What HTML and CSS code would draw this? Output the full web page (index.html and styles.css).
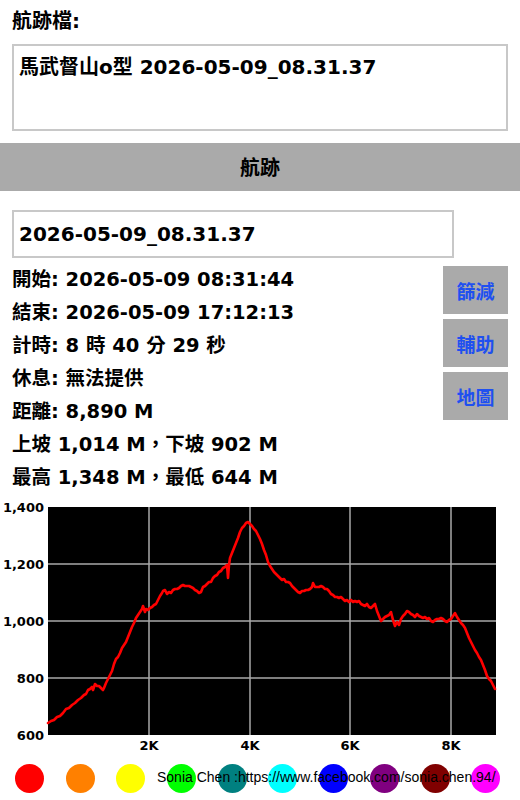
FILE: index.html
```html
<!DOCTYPE html>
<html lang="zh-Hant">
<head>
<meta charset="utf-8">
<title>航跡</title>
<link rel="stylesheet" href="styles.css">
</head>
<body>
<div class="page">
  <div class="pad">
    <div class="title">航跡檔:</div>
    <div class="filebox">馬武督山o型 2026-05-09_08.31.37</div>
  </div>
  <div class="bar">航跡</div>
  <div class="pad">
    <div class="namebox">2026-05-09_08.31.37</div>
    <div class="info-row">
      <div class="info">
        <div class="line">開始: 2026-05-09 08:31:44</div>
        <div class="line">結束: 2026-05-09 17:12:13</div>
        <div class="line">計時: 8 時 40 分 29 秒</div>
        <div class="line">休息: 無法提供</div>
        <div class="line">距離: 8,890 M</div>
        <div class="line">上坡 1,014 M，下坡 902 M</div>
        <div class="line">最高 1,348 M，最低 644 M</div>
      </div>
      <div class="buttons">
        <div class="btn">篩減</div>
        <div class="btn">輔助</div>
        <div class="btn">地圖</div>
      </div>
    </div>
  </div>
  <svg class="chart" width="520" height="262" viewBox="0 494 520 262" xmlns="http://www.w3.org/2000/svg">
    <rect x="48" y="507" width="448" height="228" fill="#000"/>
    <g stroke="#a8a8a8" stroke-width="1.5">
      <line x1="149" y1="507" x2="149" y2="735"/>
      <line x1="250" y1="507" x2="250" y2="735"/>
      <line x1="350" y1="507" x2="350" y2="735"/>
      <line x1="451" y1="507" x2="451" y2="735"/>
      <line x1="48" y1="564" x2="496" y2="564"/>
      <line x1="48" y1="621" x2="496" y2="621"/>
      <line x1="48" y1="678" x2="496" y2="678"/>
    </g>
    <polyline fill="none" stroke="#ff0000" stroke-width="2.6" stroke-linejoin="round" stroke-linecap="round" points="48,723 51,721 54,720 57,717 60,716 63,713 66,709 69,708 72,705 75,703 78,700 81,698 84,695 86,694 88,690 90,689 92,687 93,690 95,684 97,686 99,686 101,688 103,690 104,688 106,683 108,679 110,675 112,671 114,664 116,659 118,657 120,653 122,648 124,645 126,642 128,637 130,632 132,627 134,623 136,618 138,615 140,612 142,609 143,606 144,609 145,612 146,609 148,610 150,608 152,607 154,605 156,604 158,600 160,596 162,593 163,591 165,590 167,594 169,592 171,593 173,590 175,589 177,589 179,588 181,586 183,585 185,586 187,586 189,586 191,587 193,588 195,590 197,591 199,593 201,592 203,587 205,586 207,584 209,582 211,582 213,578 215,576 217,575 219,572 221,571 223,568 225,567 227,565 228,578 229,565 230,558 232,553 234,548 236,543 238,538 240,532 242,528 244,526 246,523 248,522 250,524 252,526 254,529 256,531 258,535 260,539 262,544 264,550 266,555 268,562 270,566 272,569 274,572 276,574 278,576 280,578 282,580 284,579 286,582 288,582 290,583 292,586 294,588 296,590 298,592 300,593 302,591 304,591 306,590 308,590 310,589 312,587 313,583 315,587 317,587 319,587 321,586 323,587 325,589 327,589 329,591 331,594 333,595 335,597 337,597 339,598 341,597 343,599 345,601 347,600 349,602 351,600 353,602 355,601 357,602 359,601 361,604 363,605 365,606 367,604 369,607 371,608 373,606 375,604 377,611 379,616 381,621 383,619 385,617 387,616 389,615 391,612 393,620 395,626 397,622 399,625 401,619 403,616 405,614 407,611 409,612 411,614 413,615 415,617 417,614 419,616 421,617 423,618 425,617 427,619 429,618 431,621 433,622 435,620 437,619 439,619 441,618 443,619 445,621 447,622 449,620 451,619 453,616 455,613 457,617 459,620 461,623 463,625 465,628 467,633 469,638 471,642 473,646 475,650 477,653 479,657 481,660 483,665 485,670 487,676 489,679 491,681 493,685 495,689"/>
    <g class="ylab" text-anchor="end">
      <text x="44" y="511.5">1,400</text>
      <text x="44" y="568.5">1,200</text>
      <text x="44" y="625.5">1,000</text>
      <text x="44" y="682.5">800</text>
      <text x="44" y="739.5">600</text>
    </g>
    <g class="xlab" text-anchor="middle">
      <text x="149" y="749.5">2K</text>
      <text x="250" y="749.5">4K</text>
      <text x="350" y="749.5">6K</text>
      <text x="451" y="749.5">8K</text>
    </g>
  </svg>
  <div class="footer">
    <div class="dots">
      <span class="dot red"></span>
      <span class="dot orange"></span>
      <span class="dot yellow"></span>
      <span class="dot green"></span>
      <span class="dot teal"></span>
      <span class="dot cyan"></span>
      <span class="dot blue"></span>
      <span class="dot purple"></span>
      <span class="dot maroon"></span>
      <span class="dot magenta"></span>
    </div>
    <div class="credit">Sonia Chen :https://www.facebook.com/sonia.chen.94/</div>
  </div>
</div>
</body>
</html>
```

FILE: styles.css
```css
html, body {
  margin: 0;
  padding: 0;
  background: #fff;
}

body {
  font-family: "DejaVu Sans", "Noto Sans CJK TC", sans-serif;
  font-weight: bold;
  color: #000;
}

.page {
  width: 520px;
  height: 800px;
  overflow: hidden;
}

.pad {
  padding: 0 12px;
}

.title {
  height: 44px;
  line-height: 42px;
  font-size: 20px;
}

.filebox {
  box-sizing: border-box;
  height: 87px;
  border: 2px solid #c8c8c8;
  padding: 6px 5px;
  font-size: 20px;
  line-height: 30px;
  white-space: nowrap;
}

.bar {
  margin-top: 12px;
  height: 48px;
  background: #aaaaaa;
  text-align: center;
  font-size: 20px;
  line-height: 50px;
}

.namebox {
  box-sizing: border-box;
  margin-top: 19px;
  width: 442px;
  height: 48px;
  border: 2px solid #c8c8c8;
  padding: 0 5px;
  font-size: 20px;
  line-height: 44px;
}

.info-row {
  display: flex;
  justify-content: space-between;
  margin-top: 5px;
}

.line {
  font-size: 19.5px;
  line-height: 33px;
  white-space: nowrap;
}

.buttons {
  display: flex;
  flex-direction: column;
  gap: 5px;
  margin-top: 3px;
}

.btn {
  width: 65px;
  height: 48px;
  background: #aaaaaa;
  color: #1f50f0;
  font-size: 19px;
  display: flex;
  align-items: center;
  justify-content: center;
}

.chart {
  display: block;
}

.chart text {
  font-family: "DejaVu Sans", sans-serif;
  font-weight: bold;
  font-size: 13px;
  fill: #000;
}

.footer {
  position: relative;
  padding-top: 8px;
}

.dots {
  display: flex;
  gap: 21.7px;
  padding-left: 15px;
}

.dot {
  width: 29px;
  height: 29px;
  border-radius: 50%;
}

.red { background: #ff0000; }
.orange { background: #ff8000; }
.yellow { background: #ffff00; }
.green { background: #00ff00; }
.teal { background: #008080; }
.cyan { background: #00ffff; }
.blue { background: #0000ff; }
.purple { background: #800080; }
.maroon { background: #800000; }
.magenta { background: #ff00ff; }

.credit {
  position: absolute;
  left: 157px;
  top: 13px;
  font-family: "Liberation Sans", Arial, sans-serif;
  font-weight: normal;
  font-size: 14px;
  line-height: 16px;
  white-space: nowrap;
  color: #000;
}
```
